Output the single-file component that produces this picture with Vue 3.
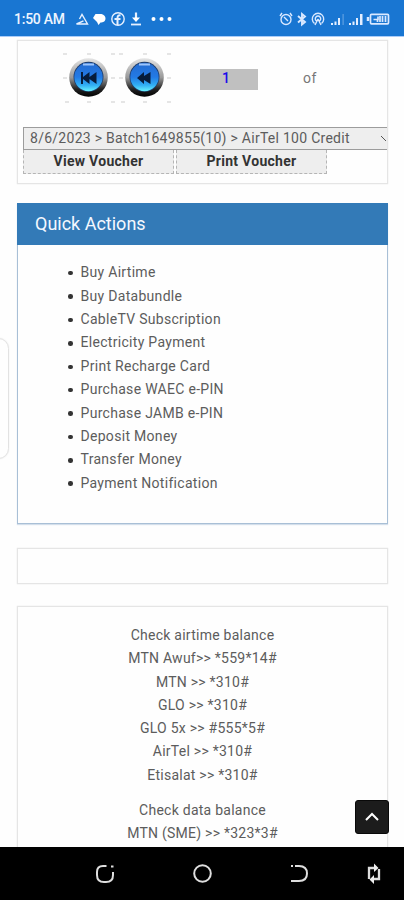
<script setup>
const actions = ['Buy Airtime', 'Buy Databundle', 'CableTV Subscription', 'Electricity Payment', 'Print Recharge Card', 'Purchase WAEC e-PIN', 'Purchase JAMB e-PIN', 'Deposit Money', 'Transfer Money', 'Payment Notification']
const airtime = ['Check airtime balance', 'MTN Awuf>> *559*14#', 'MTN >> *310#', 'GLO >> *310#', 'GLO 5x >> #555*5#', 'AirTel >> *310#', 'Etisalat >> *310#']
const data = ['Check data balance', 'MTN (SME) >> *323*3#']
const pagers = ['first', 'previous']
</script>

<template>
  <div class="screen">
    <header class="status">
      <span class="time">1:50 AM</span>
      <svg class="left-icons" width="100" height="20" viewBox="0 0 100 20" fill="none" stroke="#e6f0ff" stroke-width="1.4">
        <path d="M5.500 9L8 4.500l5.500 9.500H2.500l7-3.200" />
        <path d="M21.500 4h6q4 1 4 4.500t-4 4h-1l-2 2.500-1.500-3-4-4z" fill="#fff" stroke="none" />
        <circle cx="44" cy="9" r="6.200" />
        <path d="M43.500 15V8q0-3 3-2.600M40.500 9h6" stroke-width="2" />
        <path d="M62 2.500v7" stroke-width="2.200" /><path d="M58 7.500h8l-4 4.500z" fill="#fff" stroke="none" /><path d="M57 14.500h10" stroke-width="1.800" />
        <g fill="#fff" stroke="none"><circle cx="79.500" cy="9" r="2" /><circle cx="87.500" cy="9" r="2" /><circle cx="95.500" cy="9" r="2" /></g>
      </svg>
      <svg class="right-icons" width="114" height="20" viewBox="0 0 114 20" fill="none" stroke="#d9e8ff" stroke-width="1.400">
        <circle cx="8" cy="9.500" r="5" /><path d="M6 7l4 4M2 6l2-3M14 6l-2-3" />
        <path d="M20 6l7 6-3 2.500V4l3 2.500-7 6" stroke-width="1.900" />
        <path d="M36.500 13.500a5.700 5.700 0 1 1 7 0M38.500 11a2.700 2.700 0 1 1 3 0M40 9l-3 6M40 9l3 6" />
        <g fill="#e3eeff" stroke="none"><path d="M53 13h2v2h-2zM56.500 11.500h2V15h-2zM60 8h2v7h-2zM71 13h2v2h-2zM74.500 11.500h2V15h-2zM78 8h2v7h-2zM82 4h2.500v11H82z" /><path d="M64.500 4h1.200v11h-1.200z" opacity=".35" /></g>
        <rect x="92.500" y="4.300" width="18" height="9.500" rx="1" stroke-width="1.700" />
        <path d="M90 7v4" stroke-width="2.500" /><path d="M95.500 9.500h4.500V6.500M102 6v6M99.500 9.500V12M104.500 6v6M107.500 6v6" stroke-width="1.700" />
      </svg>
    </header>

    <main class="content">
      <section class="card voucher">
        <div class="pager">
          <svg v-for="kind in pagers" :key="kind" class="orb" width="56" height="54" viewBox="0 0 56 54">
            <defs>
              <linearGradient :id="`rim-${kind}`" x2="0" y2="1"><stop stop-color="#e5e5e5" /><stop offset=".5" stop-color="#999" /><stop offset=".8" stop-color="#222" /><stop offset="1" stop-color="#000" /></linearGradient>
              <linearGradient :id="`face-${kind}`" x2="0" y2="1"><stop stop-color="#246bd0" /><stop offset=".5" stop-color="#237ae5" /><stop offset=".78" stop-color="#30adf4" /><stop offset="1" stop-color="#68f2ff" /></linearGradient>
            </defs>
            <path d="M2 2h4M26 2h4M50 2h4M2 26h4M50 26h4M4 50h4M26 50h4M50 50h4" stroke="#ccc" />
            <circle cx="27.500" cy="25.500" r="19.300" :fill="`url(#rim-${kind})`" />
            <circle cx="27.500" cy="24.800" r="15" fill="#1d3c6b" />
            <circle cx="27.500" cy="25" r="14.200" :fill="`url(#face-${kind})`" />
            <path d="M22 12.500h11" fill="none" stroke="#9ec5fa" stroke-width="2" />
            <path v-if="kind === 'first'" d="M20 20v12h2v-5l6.500 5v-5l7 5V20l-7 5v-5L22 25v-5z" fill="#071c3b" />
            <path v-else d="M20 26l7-6v4l6.500-4v12L27 28v4z" fill="#071c3b" />
          </svg>
          <span class="page">1</span><span class="of">of</span>
        </div>
        <div class="select"><span>8/6/2023 &gt; Batch1649855(10) &gt; AirTel 100 Credit</span><svg width="6" height="8" viewBox="0 0 6 8"><path d="M0 1l5 5" stroke="#555" /></svg></div>
        <div class="buttons"><button>View Voucher</button><button>Print Voucher</button></div>
      </section>

      <section class="quick">
        <h2>Quick Actions</h2>
        <ul><li v-for="item in actions" :key="item"><span>{{ item }}</span></li></ul>
      </section>
      <section class="card empty"></section>
      <section class="card balances">
        <div><p v-for="item in airtime" :key="item">{{ item }}</p></div>
        <div><p v-for="item in data" :key="item">{{ item }}</p></div>
      </section>
    </main>

    <div class="edge-handle"></div>
    <button class="top" aria-label="Back to top"><svg width="16" height="12" viewBox="0 0 16 12"><path d="M2 9l6-6 6 6" fill="none" stroke="#fff" stroke-width="2" /></svg></button>
    <nav class="navigation">
      <svg width="22" height="22" viewBox="0 0 22 22"><path d="M12.500 3H9Q3 3 3 9v3q0 7 7 7h2q7 0 7-7V9" /><path d="M17 3.500h2.500" /></svg>
      <svg width="22" height="22" viewBox="0 0 22 22"><circle cx="11.500" cy="10.500" r="8.300" /></svg>
      <svg width="22" height="22" viewBox="0 0 22 22"><path d="M7 3h4q8 0 8 7.500T11 18H3M3 3h2" /></svg>
      <svg width="22" height="22" viewBox="0 0 22 22"><path d="M7 16V5h7M17 6v10h-7" stroke-width="2.300" /><path d="M12 .5L16.500 5 12 9zM12 12l-4.500 4.500L12 21z" fill="#eee" stroke="none" /></svg>
    </nav>
  </div>
</template>

<style>
body { margin: 0; background: #fefefe; }
</style>
<style scoped>
* { box-sizing: border-box; }
.screen { position: relative; display: flex; flex-direction: column; width: 404px; height: 900px; overflow: hidden; background: #fefefe; color: #5c5c5c; font: 14px Roboto, sans-serif; }
svg { flex: none; display: block; }
.status { display: flex; align-items: center; height: 37px; flex: none; padding: 2px 12px 0 14px; background: #1976d2; border-bottom: 1px solid #aaccf8; color: #eef5ff; }
.time { width: 60px; white-space: nowrap; font-size: 14px; font-weight: 500; letter-spacing: -.25px; }
.left-icons { margin-top: 1px; }
.right-icons { margin: 1px 0 0 auto; }
.content { display: flex; flex-direction: column; height: 810px; overflow: hidden; padding: 3px 16px 0 17px; }
.card { flex: none; border: 1px solid #e5e5e5; box-shadow: 0 0 1px #ddd; background: #fefefe; }
.voucher { height: 144px; padding: 11px 0 0 5px; overflow: hidden; }
.pager { display: flex; align-items: center; height: 54px; padding-left: 38px; }
.page { width: 58px; height: 21px; background: #c0c0c0; color: #1b0bea; font-weight: 500; line-height: 19px; text-align: center; padding-right: 6px; }
.orb + .page { margin-left: 27px; }
.of { margin: -2px 0 0 45px; color: #777; letter-spacing: .5px; }
.select { display: flex; align-items: center; justify-content: space-between; height: 23px; margin-top: 21px; padding-left: 6px; border: 1px solid #9c9c9c; border-right: 0; background: #eee; letter-spacing: .27px; white-space: nowrap; }
.select span { margin-top: -2px; }
.buttons { display: flex; gap: 2px; }
.buttons button { width: 151px; height: 24px; padding: 0 0 2px; border: 1px dashed #b5b5b5; border-top: 0; background: #eee; color: #333; font: 700 14px Roboto, sans-serif; letter-spacing: .27px; }
.quick { flex: none; height: 321px; margin-top: 19px; border: 1px solid #a8bfd6; border-top: 0; box-shadow: 0 1px 1px #d4dfeb; }
h2 { height: 42px; margin: 0 -1px; padding-left: 18px; background: #337ab7; color: #f4f8ff; font-size: 18px; font-weight: 400; letter-spacing: 0; line-height: 41px; }
ul { margin: 0; padding: 15.500px 0 0 62px; list-style: none; }
li { display: flex; align-items: center; height: 23.400px; letter-spacing: .3px; }
li::before { content: ''; width: 4.500px; height: 4.500px; margin: 2px 8px 0 -12px; border-radius: 50%; background: #333; }
li span { white-space: nowrap; }
.empty { height: 36px; margin-top: 24px; }
.balances { height: 250px; margin-top: 22px; padding-top: 17px; text-align: center; letter-spacing: .25px; }
.balances div + div { margin-top: 11.500px; }
.balances p { height: 23.300px; margin: 0; line-height: 23.300px; }
.edge-handle { position: absolute; top: 338px; left: -12px; width: 21px; height: 121px; border: 1px solid #e2e2e2; border-radius: 12px; background: #fefefe; box-shadow: 0 0 2px #eee; }
.top { position: absolute; top: 800px; left: 355px; display: grid; place-items: center; width: 34px; height: 34px; padding: 0; border: 1px solid #090909; border-radius: 3px; background: #1c1c1c; }
.navigation { position: relative; display: grid; grid-template-columns: 97px 97px 74px 22px; align-items: center; flex: none; height: 53px; padding-left: 94px; background: #000; }
.navigation svg { fill: none; stroke: #dedede; stroke-width: 2; }
</style>
